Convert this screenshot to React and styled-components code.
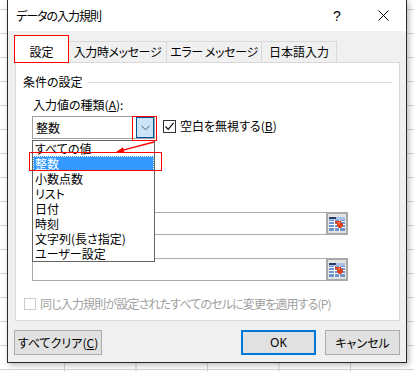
import React from 'react';
import styled, { createGlobalStyle } from 'styled-components';

const Global = createGlobalStyle`
  html, body { margin: 0; padding: 0; }
  body {
    width: 414px;
    height: 372px;
    overflow: hidden;
    font-family: "Noto Sans CJK JP", "Noto Sans", sans-serif;
    font-size: 12px;
    font-feature-settings: "palt";
    color: #000;
  }
`;

const Sheet = styled.div`
  width: 414px;
  height: 372px;
  overflow: hidden;
  background-color: #fff;
  background-image:
    linear-gradient(to right, #d4d4d4 1px, transparent 1px),
    linear-gradient(to bottom, #d4d4d4 1px, transparent 1px);
  background-size: 71.5px 100%, 100% 24px;
  background-position: 64px 0, 0 9px;
`;

const Dialog = styled.div`
  margin-left: 7px;
  width: 400px;
  height: 363px;
  box-sizing: border-box;
  border: 1px solid #2a2a2a;
  border-top: none;
  background: #f0f0f0;
  display: flex;
  flex-direction: column;
  box-shadow: 2px 2px 6px rgba(0, 0, 0, 0.28);
`;

const TitleBar = styled.div`
  height: 31px;
  flex: none;
  background: #fff;
  display: flex;
  align-items: center;
  padding-left: 8px;
`;

const TitleText = styled.div`
  flex: 1;
  font-size: 12px;
  line-height: 16px;
  letter-spacing: -1px;
`;

const CaptionButton = styled.div`
  width: 46px;
  height: 31px;
  display: flex;
  align-items: center;
  justify-content: center;
  font-family: "Liberation Sans", sans-serif;
  font-size: 14px;
`;

const Body = styled.div`
  flex: 1;
  padding: 4px 6px 0 7px;
  display: flex;
  flex-direction: column;
`;

const TabStrip = styled.div`
  display: flex;
  align-items: flex-end;
  height: 28px;
  margin-left: -1px;
  position: relative;
  z-index: 2;
`;

const Tab = styled.div`
  box-sizing: border-box;
  width: ${p => p.$w}px;
  height: ${p => (p.$active ? 28 : 21)}px;
  margin-bottom: ${p => (p.$active ? 0 : 1)}px;
  margin-left: ${p => (p.$first ? 0 : -1)}px;
  border: 1px solid ${p => (p.$active ? '#ff0000' : '#d9d9d9')};
  border-bottom: ${p => (p.$active ? '1px solid #ff0000' : 'none')};
  background: ${p => (p.$active ? '#fff' : '#f0f0f0')};
  display: flex;
  justify-content: center;
  align-items: ${p => (p.$active ? 'flex-start' : 'center')};
  padding-top: ${p => (p.$active ? 8 : 0)}px;
  line-height: 16px;
  white-space: nowrap;
  letter-spacing: ${p => (p.$tight ? '-0.4px' : '0')};
  position: relative;
  z-index: ${p => (p.$active ? 2 : 1)};
`;

const Panel = styled.div`
  box-sizing: border-box;
  height: 259px;
  margin-top: -1px;
  background: #fff;
  border: 1px solid #d9d9d9;
  display: flex;
  flex-direction: column;
  position: relative;
  z-index: 1;
`;

const GroupHeader = styled.div`
  margin-top: 11px;
  height: 16px;
  padding-left: 7px;
  padding-right: 7px;
  display: flex;
  align-items: center;
  gap: 5px;
  line-height: 16px;
`;

const GroupLine = styled.div`
  flex: 1;
  height: 1px;
  background: #dcdcdc;
  margin-top: 1px;
`;

const FieldLabel = styled.div`
  margin-top: ${p => p.$mt}px;
  margin-left: 17px;
  height: 16px;
  line-height: 16px;
  white-space: nowrap;
`;

const ComboRow = styled.div`
  margin-top: 3px;
  margin-left: 16px;
  display: flex;
  align-items: flex-start;
  gap: 8px;
  position: relative;
  z-index: 5;
`;

const ComboWrap = styled.div`
  position: relative;
  width: 123px;
  height: 23px;
`;

const Combo = styled.div`
  box-sizing: border-box;
  width: 123px;
  height: 23px;
  border: 1px solid #a0a0a0;
  background: #fff;
  display: flex;
  align-items: stretch;
`;

const ComboText = styled.div`
  flex: 1;
  padding-left: 3px;
  display: flex;
  align-items: center;
  line-height: 16px;
`;

const DropButton = styled.div`
  box-sizing: border-box;
  width: 18px;
  background: #cce4f7;
  border: 1px solid #005499;
  display: flex;
  align-items: center;
  justify-content: center;
`;

const DropList = styled.div`
  position: absolute;
  left: 0;
  top: 24px;
  box-sizing: border-box;
  width: 123px;
  height: 122px;
  border: 1px solid #646464;
  background: #fff;
  z-index: 6;
`;

const ListItem = styled.div`
  height: 15px;
  line-height: 15px;
  padding-left: 2px;
  white-space: nowrap;
  color: ${p => (p.$sel ? '#fff' : '#000')};
  background: ${p => (p.$sel ? '#3399ff' : 'transparent')};
  outline: ${p => (p.$sel ? '1px dotted #ffffff' : 'none')};
  outline-offset: -1px;
`;

const RedBox = styled.div`
  position: absolute;
  left: ${p => p.$x}px;
  top: ${p => p.$y}px;
  width: ${p => p.$w}px;
  height: ${p => p.$h}px;
  box-sizing: border-box;
  border: 1px solid #ff0000;
  z-index: 8;
  pointer-events: none;
`;

const ArrowSvg = styled.svg`
  position: absolute;
  left: 80px;
  top: 22px;
  z-index: 9;
  overflow: visible;
`;

const CheckLabel = styled.label`
  margin-top: 2px;
  height: 16px;
  display: flex;
  align-items: center;
  gap: 4px;
  line-height: 16px;
  white-space: nowrap;
  color: ${p => (p.$disabled ? '#a0a0a0' : '#000')};
  margin-left: ${p => p.$ml || 0}px;
  letter-spacing: ${p => (p.$disabled ? '-0.85px' : '0')};
`;

const Box = styled.span`
  box-sizing: border-box;
  width: ${p => p.$size}px;
  height: ${p => p.$size}px;
  border: 1px solid ${p => (p.$disabled ? '#cccccc' : '#333333')};
  background: #fff;
  display: flex;
  align-items: center;
  justify-content: center;
`;

const RefField = styled.div`
  margin-top: ${p => p.$mt}px;
  margin-left: 16px;
  width: 316px;
  height: 23px;
  display: flex;
  box-sizing: border-box;
`;

const RefInput = styled.div`
  flex: 1;
  box-sizing: border-box;
  border: 1px solid #ababab;
  border-right: none;
  background: #fff;
`;

const RefButton = styled.div`
  box-sizing: border-box;
  width: 22px;
  height: 23px;
  border: 2px solid #a9a9a9;
  background: #e3e3e3;
  display: flex;
  align-items: center;
  justify-content: center;
`;

const BottomRow = styled.div`
  margin-top: 13px;
`;

const Footer = styled.div`
  margin-top: 9px;
  margin-left: -1px;
  display: flex;
  align-items: center;
  gap: 9px;
`;

const Spacer = styled.div`
  flex: 1;
`;

const Button = styled.div`
  box-sizing: border-box;
  width: ${p => p.$w}px;
  height: 25px;
  background: #e1e1e1;
  border: ${p => (p.$default ? '2px solid #0078d7' : '1px solid #adadad')};
  display: flex;
  align-items: center;
  justify-content: center;
  line-height: 16px;
  white-space: nowrap;
  font-family: ${p => (p.$latin ? '"Noto Sans", sans-serif' : 'inherit')};
`;

const Chevron = () => (
  <svg width="9" height="6" viewBox="0 0 9 6">
    <polyline points="0.5,0.8 4.5,4.8 8.5,0.8" fill="none" stroke="#555" strokeWidth="1" />
  </svg>
);

const CheckMark = () => (
  <svg width="11" height="11" viewBox="0 0 11 11">
    <polyline points="1.5,5.5 4.2,8.3 9.6,1.8" fill="none" stroke="#111" strokeWidth="1.2" />
  </svg>
);

const CloseIcon = () => (
  <svg width="11" height="11" viewBox="0 0 11 11">
    <line x1="0.5" y1="0.5" x2="10.5" y2="10.5" stroke="#000" strokeWidth="1" />
    <line x1="10.5" y1="0.5" x2="0.5" y2="10.5" stroke="#000" strokeWidth="1" />
  </svg>
);

const RefIcon = () => (
  <svg width="16" height="14" viewBox="0 0 16 14">
    <rect x="0" y="0" width="16" height="14" fill="#6f95cf" />
    <rect x="0" y="0" width="16" height="3" fill="#a9c1e6" />
    <rect x="0" y="0" width="7" height="2" fill="#2c3e66" />
    {[4, 7, 10].map(y => (
      <rect key={y} x="0" y={y} width="16" height="1" fill="#ffffff" />
    ))}
    {[5, 10].map(x => (
      <rect key={x} x={x} y="3" width="1" height="11" fill="#ffffff" />
    ))}
    <polygon points="6,4 12,4 12,5 14,7 14,9 12,11 10,11 8,9 8,7 6,6" fill="#e0401e" />
    <polygon points="8,5 11,5 11,8" fill="#f27a4f" />
  </svg>
);

const U = styled.span`
  text-decoration: underline;
  text-underline-offset: 1px;
`;

export default function App() {
  const items = ['すべての値', '整数', '小数点数', 'リスト', '日付', '時刻', '文字列(長さ指定)', 'ユーザー設定'];
  return (
    <>
      <Global />
      <Sheet>
        <Dialog>
          <TitleBar>
            <TitleText>データの入力規則</TitleText>
            <CaptionButton>?</CaptionButton>
            <CaptionButton><CloseIcon /></CaptionButton>
          </TitleBar>
          <Body>
            <TabStrip>
              <Tab $w={55} $first $active>設定</Tab>
              <Tab $w={99} $tight>入力時メッセージ</Tab>
              <Tab $w={96} $tight>エラー メッセージ</Tab>
              <Tab $w={76}>日本語入力</Tab>
            </TabStrip>
            <Panel>
              <GroupHeader>
                <span>条件の設定</span>
                <GroupLine />
              </GroupHeader>
              <FieldLabel $mt={7}>入力値の種類(<U>A</U>):</FieldLabel>
              <ComboRow>
                <ComboWrap>
                  <Combo>
                    <ComboText>整数</ComboText>
                    <DropButton><Chevron /></DropButton>
                  </Combo>
                  <DropList>
                    {items.map((t, i) => (
                      <ListItem key={t} $sel={i === 1}>{t}</ListItem>
                    ))}
                  </DropList>
                  <RedBox $x={100} $y={0} $w={25} $h={25} />
                  <RedBox $x={-3} $y={36} $w={133} $h={19} />
                  <ArrowSvg width="50" height="20" viewBox="0 0 50 20">
                    <line x1="42" y1="4" x2="10" y2="12.4" stroke="#ff0000" strokeWidth="1.3" />
                    <polygon points="4,14 12.6,15 11,9.2" fill="#ff0000" />
                  </ArrowSvg>
                </ComboWrap>
                <CheckLabel>
                  <Box $size={13}><CheckMark /></Box>
                  <span>空白を無視する(<U>B</U>)</span>
                </CheckLabel>
              </ComboRow>
              <RefField $mt={73}>
                <RefInput />
                <RefButton><RefIcon /></RefButton>
              </RefField>
              <RefField $mt={23}>
                <RefInput />
                <RefButton><RefIcon /></RefButton>
              </RefField>
              <BottomRow>
                <CheckLabel $disabled $ml={8}>
                  <Box $size={12} $disabled />
                  <span>同じ入力規則が設定されたすべてのセルに変更を適用する(P)</span>
                </CheckLabel>
              </BottomRow>
            </Panel>
            <Footer>
              <Button $w={88}>すべてクリア(<U>C</U>)</Button>
              <Spacer />
              <Button $w={75} $default $latin>OK</Button>
              <Button $w={75}>キャンセル</Button>
            </Footer>
          </Body>
        </Dialog>
      </Sheet>
    </>
  );
}
